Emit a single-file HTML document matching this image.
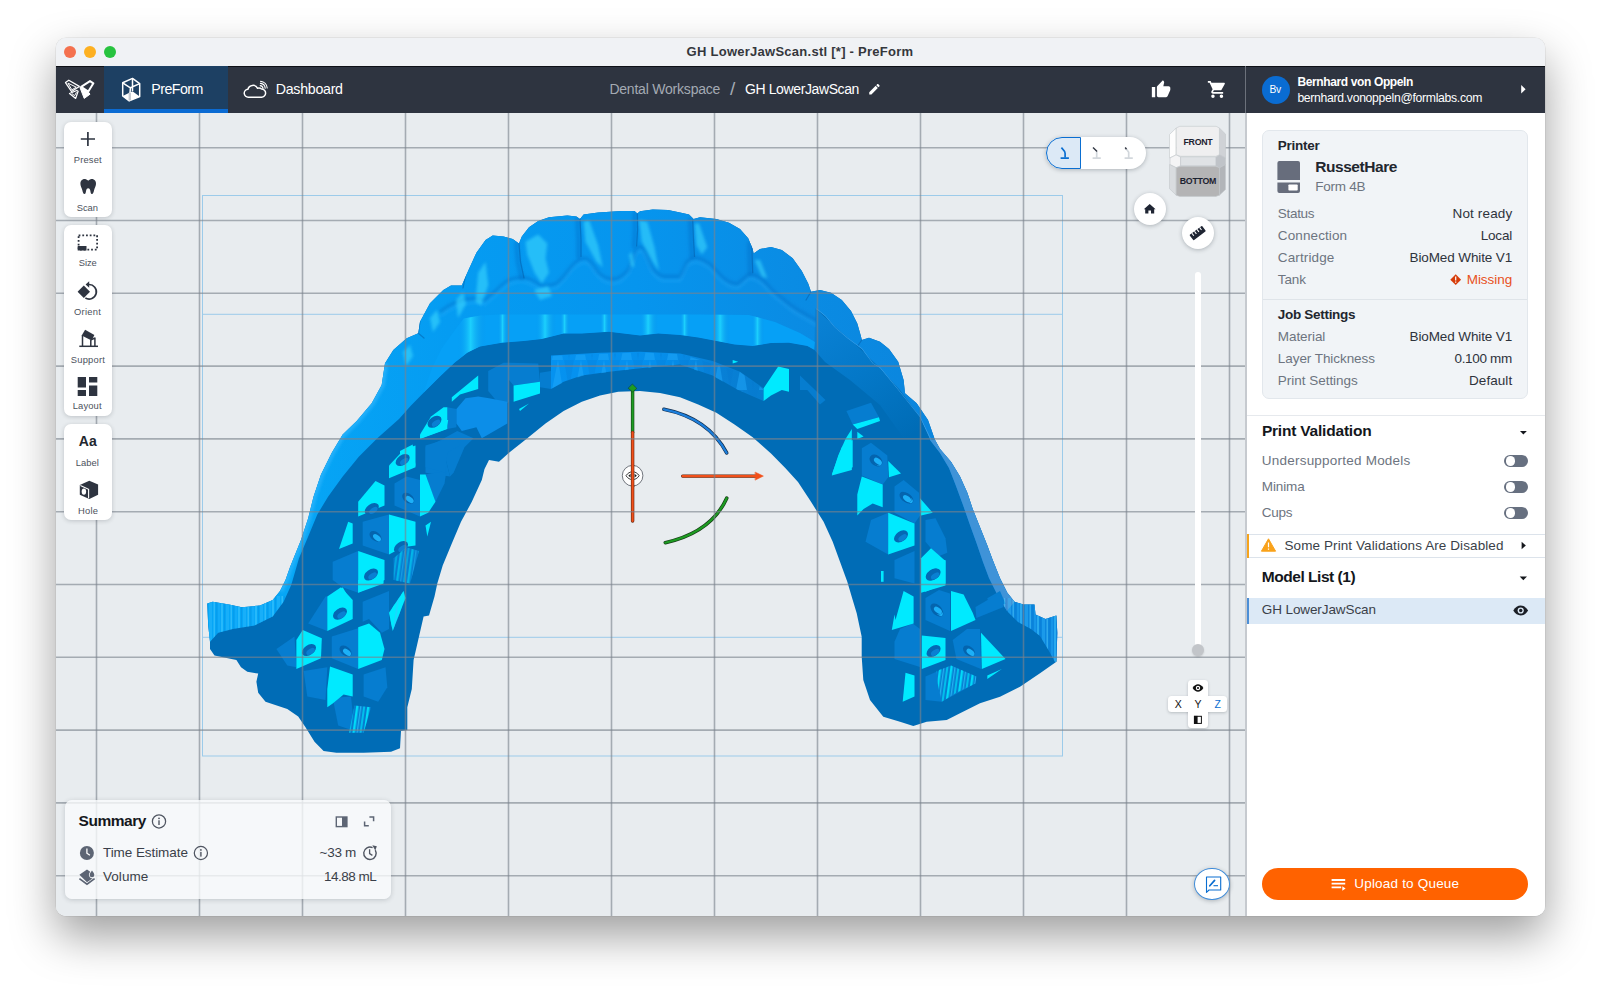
<!DOCTYPE html>
<html lang="en">
<head>
<meta charset="utf-8">
<title>GH LowerJawScan.stl [*] - PreForm</title>
<style>
html,body{margin:0;padding:0;background:#fff;}
body{width:1600px;height:990px;position:relative;overflow:hidden;font-family:"Liberation Sans",Arial,sans-serif;}
.t{position:absolute;white-space:nowrap;line-height:0;}
#win{position:absolute;left:56px;top:37.5px;width:1488.5px;height:878.5px;border-radius:10px;overflow:hidden;background:#e8ecef;}
#shadow{position:absolute;left:56px;top:37.5px;width:1488.5px;height:878.5px;border-radius:10px;box-shadow:0 0 0 .5px rgba(0,0,0,.10),0 20px 45px rgba(0,0,0,.38);}
#titlebar{position:absolute;left:0;top:0;width:100%;height:28.5px;background:#f0f2f5;}
.tl{position:absolute;top:8.5px;width:12px;height:12px;border-radius:50%;}
#nav{position:absolute;left:0;top:28.5px;width:100%;height:47px;background:#2e3440;}
#tab{position:absolute;left:48px;top:0;width:124px;height:43px;background:#1d4063;border-bottom:4px solid #0b6bd3;}
#viewport{position:absolute;left:0;top:75.5px;width:1190px;height:803px;background:#e8ecef;overflow:hidden;}
#side{position:absolute;left:1191px;top:75.5px;width:297.5px;height:803px;background:#fff;}
.tb{position:absolute;left:8px;width:48px;background:#fff;border-radius:7px;box-shadow:0 1px 4px rgba(40,50,60,.22);}
.round{position:absolute;width:32px;height:32px;border-radius:50%;background:#fff;box-shadow:0 1px 4px rgba(40,50,60,.3);}
.tog{position:absolute;left:257.400px;width:23.600px;height:12px;border-radius:6px;background:#677080;}
.tog i{position:absolute;left:1.200px;top:1.200px;width:9.600px;height:9.600px;border-radius:50%;background:#fff;}
svg{position:absolute;overflow:visible;}
</style>
</head>
<body>
<div id="shadow"></div>
<div id="win">
 <header id="titlebar">
  <div class="tl" style="left:7.7px;background:#f4714f"></div>
  <div class="tl" style="left:27.6px;background:#fdb021"></div>
  <div class="tl" style="left:47.5px;background:#27c33f"></div>
<span class="t" style="left:630.6px;top:14.1px;font-size:13px;font-weight:700;color:#34373c;letter-spacing:0.26px;">GH LowerJawScan.stl [*] - PreForm</span>
 </header>
 <nav id="nav">
  <div style="position:absolute;left:0;top:0;width:100%;height:1px;background:#0e1117"></div>
  <div id="tab"></div>
  <div style="position:absolute;left:1189px;top:0;width:1px;height:47px;background:#6c717b"></div>
  <div style="position:absolute;left:1205.5px;top:9.5px;width:28px;height:28px;border-radius:50%;background:#0a6cd2"></div>
  <svg width="1488" height="47" viewBox="0 0 1488 47" style="left:0;top:0">
   <g fill="none" stroke="#fff" stroke-width="1.25" stroke-linejoin="round" stroke-linecap="round">
    <!-- butterfly logo -->
    <path d="M9.500 16.600L12.800 14.200L23.300 20.400L15.600 25.600Z"/>
    <path d="M12.300 17.300L20.300 21.200L16.200 23.600Z" stroke-width="1"/>
    <path d="M13.500 27.500L20.800 24.500L22.100 25.300L19.700 32.400Z"/>
    <path d="M16.200 27.800L18.600 29.700L20.300 26.600" stroke-width="1"/>
    <path d="M25.100 20.900L34 15.100L37.400 17.300L32.300 25.600Z" stroke-width="2"/>
   </g>
   <path d="M23.900 21.300L32.600 26.300L34 28.200L28.200 32.400Z" fill="#fff" stroke="#fff" stroke-width="1" stroke-linejoin="round"/>
   <!-- preform printer cube -->
   <g fill="none" stroke="#fff" stroke-width="1.5" stroke-linejoin="round">
    <path d="M66.7 16.8L76.5 12.4L83.7 17.6V30.6L73.2 34.9L66.7 30Z"/>
    <path d="M66.7 16.8L74.4 21.8L83.7 17.6M74.4 21.8L73.4 34.6M76.5 12.4V25"/>
   </g>
   <path d="M66.7 30L76.5 25.2L83.7 30.6L73.2 34.9Z" fill="#fff"/>
   <path d="M72.6 26.8H75V34.4H72.6Z" fill="#c4c9d0"/>
   <!-- cloud -->
   <path d="M192.6 31.2H205.4A4.1 4.1 0 0 0 205.6 23A4.6 4.6 0 0 0 201.6 22.3A5.2 5.2 0 0 0 191.9 23.2A4 4 0 0 0 192.6 31.2Z" fill="none" stroke="#fff" stroke-width="1.5" stroke-linejoin="round"/>
   <g fill="none" stroke="#fff" stroke-width="1.1" stroke-linecap="round">
    <path d="M204.2 19.6A3 3 0 0 1 207 22.4"/>
    <path d="M204.4 17.4A5.2 5.2 0 0 1 209.2 22.2"/>
    <path d="M204.6 15.4A7.2 7.2 0 0 1 211.2 22"/>
   </g>
   <!-- thumb up (material) -->
   <g transform="translate(1095 13.5) scale(.84)" fill="#fff"><path d="M1 21h4V9H1v12zm22-11c0-1.1-.9-2-2-2h-6.31l.95-4.57.03-.32c0-.41-.17-.79-.44-1.06L14.170 1 7.590 7.590C7.220 7.950 7 8.450 7 9v10c0 1.100.9 2 2 2h9c.83 0 1.540-.5 1.840-1.220l3.020-7.050c.09-.23.140-.47.140-.73v-2z"/></g>
   <!-- cart (material) -->
   <g transform="translate(1151 13.3) scale(.85)" fill="#fff"><path d="M7 18c-1.100 0-1.990.9-1.990 2S5.900 22 7 22s2-.9 2-2-.9-2-2-2zM1 2v2h2l3.600 7.590-1.350 2.450c-.16.280-.25.610-.25.960 0 1.100.9 2 2 2h12v-2H7.420c-.14 0-.25-.11-.25-.25l.03-.12.900-1.630h7.450c.75 0 1.410-.41 1.750-1.030l3.580-6.490A1.003 1.003 0 0 0 20 4H5.210l-.94-2H1zm16 16c-1.100 0-1.990.9-1.990 2s.890 2 1.990 2 2-.9 2-2-.9-2-2-2z"/></g>
   <!-- pencil -->
   <g transform="translate(811.5 16.2) scale(.58)" fill="#fff"><path d="M3 17.250V21h3.750L17.810 9.940l-3.750-3.750L3 17.250zM20.710 7.040a.996.996 0 0 0 0-1.410l-2.340-2.340a.996.996 0 0 0-1.410 0l-1.830 1.830 3.750 3.750 1.830-1.830z"/></g>
   <!-- right arrow -->
   <path d="M1465.200 19L1469.600 23.300L1465.200 27.600Z" fill="#fff"/>
  </svg>

<span class="t" style="left:95.3px;top:23.2px;font-size:14.2px;color:#ffffff;letter-spacing:-0.53px;">PreForm</span>
<span class="t" style="left:219.8px;top:23.2px;font-size:14.2px;color:#ffffff;letter-spacing:-0.28px;">Dashboard</span>
<span class="t" style="left:553.4px;top:22.6px;font-size:14px;color:#a4aab3;letter-spacing:-0.21px;">Dental Workspace</span>
<span class="t" style="left:689.0px;top:22.6px;font-size:14px;color:#ffffff;letter-spacing:-0.39px;">GH LowerJawScan</span>
<span class="t" style="left:1241.4px;top:15.5px;font-size:12px;font-weight:700;color:#ffffff;letter-spacing:-0.37px;">Bernhard von Oppeln</span>
<span class="t" style="left:1241.4px;top:31.5px;font-size:12.2px;color:#ffffff;letter-spacing:-0.30px;">bernhard.vonoppeln@formlabs.com</span>
<span class="t" style="left:1213.6px;top:23.9px;font-size:10.3px;color:#ffffff;letter-spacing:-0.43px;">Bv</span>
<span class="t" style="left:674.0px;top:23.0px;font-size:19px;color:#a4aab3;">/</span>
 </nav>
 <main id="viewport">
  <svg width="1190" height="803" viewBox="56 113 1190 803" style="left:0;top:0">
   <g fill="none" stroke="#9ccbea" stroke-width="1">
    <rect x="202.5" y="195.5" width="860" height="560.5"/>
    <path d="M202.5 314.3H1062.5M202.5 637.3H1062.5"/>
   </g>
<defs>
<linearGradient id="gTeeth" gradientUnits="userSpaceOnUse" x1="290" y1="0" x2="920" y2="0"><stop offset="0" stop-color="#06a6f6"/><stop offset=".25" stop-color="#059cf2"/><stop offset=".55" stop-color="#0695ee"/><stop offset=".8" stop-color="#0a8ce4"/><stop offset="1" stop-color="#0b86de"/></linearGradient>
<linearGradient id="gCyl" x1="0" y1="0" x2="1" y2="0"><stop offset="0" stop-color="#0798f0" stop-opacity="0"/><stop offset=".45" stop-color="#22dcff"/><stop offset="1" stop-color="#0c8ae2" stop-opacity="0"/></linearGradient>
<linearGradient id="gFootL" x1="0" y1="0" x2="1" y2="0"><stop offset="0" stop-color="#2fb8ff"/><stop offset=".25" stop-color="#0f8fe8"/><stop offset=".5" stop-color="#1aa8f8"/><stop offset="1" stop-color="#0c8ae2"/></linearGradient>
<linearGradient id="gWall" gradientUnits="userSpaceOnUse" x1="551" y1="0" x2="764" y2="0"><stop offset="0" stop-color="#0592f0"/><stop offset=".5" stop-color="#058fec"/><stop offset=".8" stop-color="#0880d6"/><stop offset="1" stop-color="#067dd0"/></linearGradient>
<linearGradient id="gWedge" gradientUnits="userSpaceOnUse" x1="815" y1="310" x2="905" y2="440"><stop offset="0" stop-color="#0a82d6"/><stop offset=".5" stop-color="#0478c8"/><stop offset="1" stop-color="#006cb6"/></linearGradient>
<clipPath id="cSil"><polygon points="207.3,603.6 212.7,601.8 229.0,604.5 241.8,607.3 260.0,605.5 272.7,600.0 280.0,591.0 285.5,580.0 290.0,567.3 293.6,558.2 301.0,540.0 308.2,518.2 313.6,496.4 321.0,474.5 331.8,452.7 342.7,434.5 356.7,421.0 371.7,403.3 381.7,385.0 385.0,363.3 393.3,350.0 406.7,338.3 418.3,333.3 420.0,321.7 430.0,303.3 443.3,290.0 451.0,285.5 461.8,285.5 467.3,272.7 476.4,252.7 485.5,240.0 492.7,235.5 503.6,236.4 512.7,239.0 519.0,243.6 521.8,236.4 529.0,227.3 538.2,221.0 549.0,217.3 567.3,215.5 576.4,216.4 580.0,219.0 583.6,214.5 598.2,212.4 621.8,211.0 634.5,211.0 637.3,213.6 640.0,211.3 652.7,209.5 668.0,210.0 680.0,212.5 689.0,214.5 693.6,219.0 700.0,217.3 716.4,219.0 729.0,222.7 740.0,229.0 748.2,238.2 752.7,249.0 753.6,253.6 760.0,249.0 771.0,247.0 781.8,250.0 792.7,258.2 801.8,271.0 808.2,283.6 811.0,291.8 820.0,290.0 831.0,292.7 841.8,300.0 851.0,311.0 857.3,323.6 861.0,336.4 861.8,340.0 869.0,337.8 880.0,341.8 889.0,349.0 898.2,361.8 903.6,380.0 905.0,393.3 916.7,403.3 928.0,420.0 935.0,440.0 940.0,449.0 951.0,461.8 960.0,476.4 967.3,492.7 972.7,509.0 980.0,527.3 987.3,545.5 992.7,560.0 1000.0,578.2 1007.3,592.7 1014.5,601.8 1023.6,604.5 1034.5,604.5 1035.5,614.5 1045.5,619.0 1056.4,615.5 1057.3,632.7 1056.4,661.8 1040.0,673.3 1020.0,686.7 1000.0,696.7 980.0,703.3 960.0,713.3 946.7,720.0 926.7,721.7 913.3,726.0 900.0,721.7 883.3,716.7 870.0,700.0 863.3,680.0 861.7,656.7 861.7,636.7 856.7,613.3 852.7,600.0 847.3,581.8 840.0,561.8 832.7,541.8 823.6,521.8 811.0,501.8 798.0,482.0 785.5,468.2 771.0,453.6 752.7,437.3 734.5,424.5 716.4,412.7 698.2,404.5 680.0,397.3 660.0,393.0 640.0,391.0 618.2,391.8 600.0,395.5 581.8,401.8 563.6,411.0 545.5,423.6 527.3,438.2 509.0,452.7 499.0,461.8 489.0,460.0 484.5,469.0 481.8,480.0 471.8,501.8 461.0,521.8 451.8,543.6 442.7,565.5 437.3,583.6 434.5,596.4 429.0,615.5 423.6,616.4 418.2,640.0 413.6,660.0 411.8,689.0 407.3,707.3 407.3,730.0 401.0,731.0 400.0,748.2 391.0,751.8 363.6,752.7 336.4,752.7 323.6,751.0 314.5,741.8 305.5,727.3 298.2,716.4 287.3,709.0 265.5,701.8 258.2,692.7 256.4,681.8 258.2,673.6 247.3,671.8 241.0,667.3 236.4,660.0 214.5,655.5 210.0,649.0 210.0,641.8 208.2,625.5"/></clipPath>
<clipPath id="cLight"><polygon points="207.3,603.6 212.7,601.8 229.0,604.5 241.8,607.3 260.0,605.5 272.7,600.0 280.0,591.0 285.5,580.0 290.0,567.3 293.6,558.2 301.0,540.0 308.2,518.2 313.6,496.4 321.0,474.5 331.8,452.7 342.7,434.5 356.7,421.0 371.7,403.3 381.7,385.0 385.0,363.3 393.3,350.0 406.7,338.3 418.3,333.3 420.0,321.7 430.0,303.3 443.3,290.0 451.0,285.5 461.8,285.5 467.3,272.7 476.4,252.7 485.5,240.0 492.7,235.5 503.6,236.4 512.7,239.0 519.0,243.6 521.8,236.4 529.0,227.3 538.2,221.0 549.0,217.3 567.3,215.5 576.4,216.4 580.0,219.0 583.6,214.5 598.2,212.4 621.8,211.0 634.5,211.0 637.3,213.6 640.0,211.3 652.7,209.5 668.0,210.0 680.0,212.5 689.0,214.5 693.6,219.0 700.0,217.3 716.4,219.0 729.0,222.7 740.0,229.0 748.2,238.2 752.7,249.0 753.6,253.6 760.0,249.0 771.0,247.0 781.8,250.0 792.7,258.2 801.8,271.0 808.2,283.6 811.0,291.8 820.0,290.0 831.0,292.7 841.8,300.0 851.0,311.0 857.3,323.6 861.0,336.4 861.8,340.0 869.0,337.8 880.0,341.8 889.0,349.0 898.2,361.8 903.6,380.0 905.0,393.3 916.7,403.3 928.0,420.0 935.0,440.0 940.0,449.0 951.0,461.8 960.0,476.4 967.3,492.7 972.7,509.0 980.0,527.3 987.3,545.5 992.7,560.0 1000.0,578.2 1007.3,592.7 1014.5,601.8 1023.6,604.5 1034.5,604.5 1035.5,614.5 1045.5,619.0 1056.4,615.5 1057.3,632.7 1056.4,661.8 1055.0,662.0 1049.0,651.0 1040.0,636.0 1031.0,629.0 1018.0,622.0 1007.0,611.0 998.0,596.0 989.0,578.0 983.0,562.0 976.5,543.0 970.0,525.0 963.0,505.0 956.0,486.0 949.0,468.0 940.0,453.0 930.0,440.0 920.0,417.3 898.2,390.0 880.0,368.0 872.7,363.6 861.8,349.0 847.3,338.2 834.5,327.3 825.5,316.4 816.4,309.0 815.5,330.0 814.5,350.0 807.3,346.0 789.0,342.7 771.0,343.0 752.7,346.0 734.5,344.5 716.4,341.0 698.2,337.5 680.0,335.0 658.2,333.6 640.0,335.5 609.0,331.8 581.8,333.6 563.6,333.6 541.8,339.0 523.6,341.0 501.8,342.7 480.0,346.4 467.3,352.7 454.5,362.7 440.0,376.4 423.6,392.7 411.0,405.5 399.0,419.0 377.3,438.2 359.0,456.4 342.7,476.4 328.2,496.4 317.3,514.5 308.2,536.4 299.0,558.2 292.7,580.0 291.0,585.5 283.6,601.8 272.7,616.4 254.5,625.5 232.7,629.0 218.2,632.7 210.0,641.8 208.2,625.5"/></clipPath>
</defs>
<polygon points="207.3,603.6 212.7,601.8 229.0,604.5 241.8,607.3 260.0,605.5 272.7,600.0 280.0,591.0 285.5,580.0 290.0,567.3 293.6,558.2 301.0,540.0 308.2,518.2 313.6,496.4 321.0,474.5 331.8,452.7 342.7,434.5 356.7,421.0 371.7,403.3 381.7,385.0 385.0,363.3 393.3,350.0 406.7,338.3 418.3,333.3 420.0,321.7 430.0,303.3 443.3,290.0 451.0,285.5 461.8,285.5 467.3,272.7 476.4,252.7 485.5,240.0 492.7,235.5 503.6,236.4 512.7,239.0 519.0,243.6 521.8,236.4 529.0,227.3 538.2,221.0 549.0,217.3 567.3,215.5 576.4,216.4 580.0,219.0 583.6,214.5 598.2,212.4 621.8,211.0 634.5,211.0 637.3,213.6 640.0,211.3 652.7,209.5 668.0,210.0 680.0,212.5 689.0,214.5 693.6,219.0 700.0,217.3 716.4,219.0 729.0,222.7 740.0,229.0 748.2,238.2 752.7,249.0 753.6,253.6 760.0,249.0 771.0,247.0 781.8,250.0 792.7,258.2 801.8,271.0 808.2,283.6 811.0,291.8 820.0,290.0 831.0,292.7 841.8,300.0 851.0,311.0 857.3,323.6 861.0,336.4 861.8,340.0 869.0,337.8 880.0,341.8 889.0,349.0 898.2,361.8 903.6,380.0 905.0,393.3 916.7,403.3 928.0,420.0 935.0,440.0 940.0,449.0 951.0,461.8 960.0,476.4 967.3,492.7 972.7,509.0 980.0,527.3 987.3,545.5 992.7,560.0 1000.0,578.2 1007.3,592.7 1014.5,601.8 1023.6,604.5 1034.5,604.5 1035.5,614.5 1045.5,619.0 1056.4,615.5 1057.3,632.7 1056.4,661.8 1040.0,673.3 1020.0,686.7 1000.0,696.7 980.0,703.3 960.0,713.3 946.7,720.0 926.7,721.7 913.3,726.0 900.0,721.7 883.3,716.7 870.0,700.0 863.3,680.0 861.7,656.7 861.7,636.7 856.7,613.3 852.7,600.0 847.3,581.8 840.0,561.8 832.7,541.8 823.6,521.8 811.0,501.8 798.0,482.0 785.5,468.2 771.0,453.6 752.7,437.3 734.5,424.5 716.4,412.7 698.2,404.5 680.0,397.3 660.0,393.0 640.0,391.0 618.2,391.8 600.0,395.5 581.8,401.8 563.6,411.0 545.5,423.6 527.3,438.2 509.0,452.7 499.0,461.8 489.0,460.0 484.5,469.0 481.8,480.0 471.8,501.8 461.0,521.8 451.8,543.6 442.7,565.5 437.3,583.6 434.5,596.4 429.0,615.5 423.6,616.4 418.2,640.0 413.6,660.0 411.8,689.0 407.3,707.3 407.3,730.0 401.0,731.0 400.0,748.2 391.0,751.8 363.6,752.7 336.4,752.7 323.6,751.0 314.5,741.8 305.5,727.3 298.2,716.4 287.3,709.0 265.5,701.8 258.2,692.7 256.4,681.8 258.2,673.6 247.3,671.8 241.0,667.3 236.4,660.0 214.5,655.5 210.0,649.0 210.0,641.8 208.2,625.5" fill="#006cb6" />
<polygon points="207.3,603.6 212.7,601.8 229.0,604.5 241.8,607.3 260.0,605.5 272.7,600.0 280.0,591.0 285.5,580.0 290.0,567.3 293.6,558.2 301.0,540.0 308.2,518.2 313.6,496.4 321.0,474.5 331.8,452.7 342.7,434.5 356.7,421.0 371.7,403.3 381.7,385.0 385.0,363.3 393.3,350.0 406.7,338.3 418.3,333.3 420.0,321.7 430.0,303.3 443.3,290.0 451.0,285.5 461.8,285.5 467.3,272.7 476.4,252.7 485.5,240.0 492.7,235.5 503.6,236.4 512.7,239.0 519.0,243.6 521.8,236.4 529.0,227.3 538.2,221.0 549.0,217.3 567.3,215.5 576.4,216.4 580.0,219.0 583.6,214.5 598.2,212.4 621.8,211.0 634.5,211.0 637.3,213.6 640.0,211.3 652.7,209.5 668.0,210.0 680.0,212.5 689.0,214.5 693.6,219.0 700.0,217.3 716.4,219.0 729.0,222.7 740.0,229.0 748.2,238.2 752.7,249.0 753.6,253.6 760.0,249.0 771.0,247.0 781.8,250.0 792.7,258.2 801.8,271.0 808.2,283.6 811.0,291.8 820.0,290.0 831.0,292.7 841.8,300.0 851.0,311.0 857.3,323.6 861.0,336.4 861.8,340.0 869.0,337.8 880.0,341.8 889.0,349.0 898.2,361.8 903.6,380.0 905.0,393.3 916.7,403.3 928.0,420.0 935.0,440.0 940.0,449.0 951.0,461.8 960.0,476.4 967.3,492.7 972.7,509.0 980.0,527.3 987.3,545.5 992.7,560.0 1000.0,578.2 1007.3,592.7 1014.5,601.8 1023.6,604.5 1034.5,604.5 1035.5,614.5 1045.5,619.0 1056.4,615.5 1057.3,632.7 1056.4,661.8 1055.0,662.0 1049.0,651.0 1040.0,636.0 1031.0,629.0 1018.0,622.0 1007.0,611.0 998.0,596.0 989.0,578.0 983.0,562.0 976.5,543.0 970.0,525.0 963.0,505.0 956.0,486.0 949.0,468.0 940.0,453.0 930.0,440.0 920.0,417.3 898.2,390.0 880.0,368.0 872.7,363.6 861.8,349.0 847.3,338.2 834.5,327.3 825.5,316.4 816.4,309.0 815.5,330.0 814.5,350.0 807.3,346.0 789.0,342.7 771.0,343.0 752.7,346.0 734.5,344.5 716.4,341.0 698.2,337.5 680.0,335.0 658.2,333.6 640.0,335.5 609.0,331.8 581.8,333.6 563.6,333.6 541.8,339.0 523.6,341.0 501.8,342.7 480.0,346.4 467.3,352.7 454.5,362.7 440.0,376.4 423.6,392.7 411.0,405.5 399.0,419.0 377.3,438.2 359.0,456.4 342.7,476.4 328.2,496.4 317.3,514.5 308.2,536.4 299.0,558.2 292.7,580.0 291.0,585.5 283.6,601.8 272.7,616.4 254.5,625.5 232.7,629.0 218.2,632.7 210.0,641.8 208.2,625.5" fill="url(#gTeeth)" />
<polygon points="815.0,308.0 834.5,326.0 852.7,342.0 877.0,365.0 900.0,390.0 920.0,417.0 931.0,440.0 905.0,440.0 880.0,405.0 850.0,380.0 825.0,362.0 814.5,350.0" fill="url(#gWedge)" />
<polygon points="935.0,440.0 940.0,449.0 951.0,461.8 960.0,476.4 967.3,492.7 972.7,509.0 980.0,527.3 987.3,545.5 992.7,560.0 1000.0,578.2 1007.3,592.7 1014.5,601.8 1007.0,611.0 998.0,596.0 989.0,578.0 983.0,562.0 976.5,543.0 970.0,525.0 963.0,505.0 956.0,486.0 949.0,468.0 940.0,453.0 930.0,440.0" fill="#3f93d8" />
<polygon points="551.0,355.5 600.0,352.7 640.0,351.8 680.0,353.6 712.7,361.0 740.0,371.8 763.6,388.2 763.6,401.0 738.2,390.0 712.7,375.5 680.0,364.5 640.0,368.2 609.0,371.8 581.8,375.5 563.6,381.8 551.0,389.0" fill="url(#gWall)" />
<polygon points="308.2,623.6 325.5,596.4 327.3,596.4 327.3,631.0" fill="#067dd0" />
<polygon points="331.8,636.4 358.2,628.2 358.2,669.0 331.8,658.2" fill="#067dd0" />
<polygon points="362.7,601.8 389.0,591.0 389.0,629.0 381.8,632.7 369.0,619.0 362.7,621.8" fill="#067dd0" />
<polygon points="363.6,674.5 385.5,667.3 387.3,687.3 378.2,701.8 363.6,696.4" fill="#067dd0" />
<polygon points="303.6,671.0 327.3,667.3 325.5,700.0 307.3,696.4" fill="#067dd0" />
<polygon points="276.4,649.0 294.5,636.4 296.4,667.3 287.3,665.5" fill="#067dd0" />
<polygon points="332.7,698.0 351.0,696.4 354.5,731.0 338.2,725.5" fill="#067dd0" />
<polygon points="354.5,705.5 371.0,707.3 363.6,732.7 349.0,732.7" fill="#067dd0" />
<polygon points="425.5,447.3 441.0,440.0 450.0,476.4 425.5,472.7" fill="#067dd0" />
<polygon points="441.0,440.0 457.3,431.0 473.6,438.2 464.5,447.3 453.6,472.7 450.0,476.4" fill="#067dd0" />
<polygon points="394.5,483.6 406.4,476.4 420.0,480.0 420.0,516.4 394.5,505.5" fill="#067dd0" />
<polygon points="362.7,521.8 389.0,514.5 389.0,554.5 362.7,545.5" fill="#067dd0" />
<polygon points="332.7,561.8 358.2,551.0 358.2,592.7 342.7,587.3 332.7,580.0" fill="#067dd0" />
<polygon points="393.6,558.2 406.4,547.3 419.0,551.0 410.0,583.6 393.6,580.0" fill="#067dd0" />
<polygon points="424.5,474.5 446.4,471.0 444.5,483.6 435.5,501.8" fill="#067dd0" />
<polygon points="488.2,371.0 503.6,362.7 509.0,362.7 509.0,401.8 501.8,407.3 488.2,391.0" fill="#067dd0" />
<polygon points="509.0,362.7 538.2,363.6 540.0,381.8 513.6,385.5 509.0,380.0" fill="#067dd0" />
<polygon points="540.0,372.7 551.0,371.0 551.0,389.0 540.0,387.3" fill="#067dd0" />
<polygon points="425.5,445.5 443.6,440.0 456.4,438.2 460.0,445.5 447.3,452.7 445.5,472.7 425.5,467.3" fill="#067dd0" />
<polygon points="447.3,407.3 456.4,409.0 456.4,427.3 447.3,429.0" fill="#067dd0" />
<polygon points="846.4,411.0 871.0,402.7 879.0,417.3 852.7,424.5" fill="#067dd0" />
<polygon points="800.0,375.5 825.5,400.0 820.0,404.5 807.3,390.0 800.0,390.0" fill="#067dd0" />
<polygon points="861.8,448.2 871.0,442.7 887.3,455.5 888.2,477.3 882.7,484.5 861.8,475.5" fill="#067dd0" />
<polygon points="894.5,486.4 903.6,480.0 919.0,492.7 920.0,515.5 914.5,523.6 894.5,512.7" fill="#067dd0" />
<polygon points="865.5,541.8 871.0,520.0 888.2,512.7 888.2,554.5" fill="#067dd0" />
<polygon points="925.5,520.0 935.5,518.2 945.5,538.2 947.3,552.7 938.2,556.4 931.0,548.2 925.5,541.8" fill="#067dd0" />
<polygon points="894.5,560.0 914.5,551.0 914.5,583.6 894.5,578.2" fill="#067dd0" />
<polygon points="925.5,598.0 939.0,590.0 950.0,593.6 950.0,631.0 925.5,620.0" fill="#067dd0" />
<polygon points="987.3,598.2 1000.0,591.0 1005.5,603.6 991.0,611.0" fill="#067dd0" />
<polygon points="975.5,607.0 1000.0,592.7 1003.6,607.0 976.4,618.0" fill="#067dd0" />
<polygon points="952.7,640.0 967.0,629.0 980.0,629.0 981.0,669.0 956.4,659.0" fill="#067dd0" />
<polygon points="925.5,676.4 951.0,665.5 976.4,676.4 975.5,683.6 941.8,701.8 925.5,700.0" fill="#067dd0" />
<polygon points="900.0,629.0 912.7,623.6 920.0,629.0 920.0,667.0 894.5,659.0 894.5,641.8" fill="#067dd0" />
<polygon points="456.4,409.0 465.5,398.2 478.2,396.4 489.0,398.2 507.3,401.8 507.3,423.6 481.8,438.2 476.4,427.3 461.8,431.0 456.4,423.6" fill="#0c8ee8" />
<polygon points="327.3,596.4 341.0,587.3 352.7,600.0 352.7,619.0 327.3,631.0" fill="#00eaff" />
<polygon points="358.2,580.0 383.6,580.0 383.6,583.6 358.2,592.7" fill="#00eaff" />
<polygon points="296.4,640.0 302.7,630.0 321.8,638.2 321.0,658.2 296.4,669.0" fill="#00eaff" />
<polygon points="358.2,627.3 369.0,623.6 380.0,632.7 384.5,649.0 381.8,660.0 358.2,669.0" fill="#00eaff" />
<polygon points="330.0,666.4 352.7,674.5 352.7,696.4 343.6,694.5 332.7,703.6 327.3,707.3 327.3,689.0" fill="#00eaff" />
<polygon points="389.0,612.7 403.6,591.0 405.5,598.0 392.7,631.0" fill="#00eaff" />
<polygon points="420.0,436.4 433.6,420.0 448.2,420.0 446.4,429.0 421.0,438.2" fill="#00eaff" />
<polygon points="389.0,465.5 404.5,449.0 415.5,445.5 415.5,467.3 389.0,478.2" fill="#00eaff" />
<polygon points="358.2,501.8 375.5,481.0 384.5,485.5 384.5,505.5 358.2,516.4" fill="#00eaff" />
<polygon points="420.0,474.5 425.5,474.5 435.5,501.8 428.2,512.7 420.0,516.4" fill="#00eaff" />
<polygon points="389.0,514.5 415.5,521.8 415.5,545.5 402.7,547.3 389.0,554.5" fill="#00eaff" />
<polygon points="339.0,549.0 348.2,521.8 352.7,523.6 352.7,543.6" fill="#00eaff" />
<polygon points="358.2,551.0 384.5,560.0 384.5,580.0 358.2,592.7" fill="#00eaff" />
<polygon points="331.8,600.0 342.7,587.3 350.0,600.0 340.0,606.0" fill="#00eaff" />
<polygon points="425.5,525.5 431.0,521.8 427.3,536.4" fill="#00eaff" />
<polygon points="513.6,385.5 540.0,381.8 540.0,393.6 513.6,401.8" fill="#00eaff" />
<polygon points="451.8,397.3 478.2,375.5 478.2,389.0 460.0,394.5 451.8,401.8" fill="#00eaff" />
<polygon points="420.0,434.5 431.0,416.4 443.6,407.3 447.3,407.3 447.3,429.0 420.0,439.0" fill="#00eaff" />
<polygon points="519.0,409.0 529.0,403.6 520.0,411.0" fill="#00eaff" />
<polygon points="400.0,451.0 412.7,444.5 415.5,465.5 400.0,472.7" fill="#00eaff" />
<polygon points="763.6,388.2 778.2,366.4 789.0,369.0 789.0,391.8 781.8,390.0 771.0,395.5 763.6,401.0" fill="#00eaff" />
<polygon points="732.7,360.0 738.2,361.8 732.7,363.6" fill="#00eaff" />
<polygon points="852.7,424.5 879.0,417.3 880.0,421.0 857.3,429.0" fill="#00eaff" />
<polygon points="851.8,429.0 851.8,470.0 831.8,475.5 838.2,455.5 845.5,439.0" fill="#00eaff" />
<polygon points="857.3,431.8 863.6,436.4 857.3,439.0" fill="#00eaff" />
<polygon points="888.2,461.0 901.0,473.6 889.0,477.3" fill="#00eaff" />
<polygon points="861.8,476.4 882.7,484.5 882.7,507.3 872.7,503.6 863.6,509.0 857.3,515.5 857.3,494.5" fill="#00eaff" />
<polygon points="831.8,474.5 841.8,447.3 852.7,440.0 852.7,467.3" fill="#00eaff" />
<polygon points="920.0,498.2 932.7,512.7 921.0,515.5" fill="#00eaff" />
<polygon points="888.2,512.7 914.5,523.6 914.5,545.5 888.2,554.5" fill="#00eaff" />
<polygon points="921.0,558.2 931.0,548.2 945.5,561.0 945.5,585.5 921.0,592.7" fill="#00eaff" />
<polygon points="895.5,620.0 903.6,591.0 913.6,596.4 913.6,623.6 891.8,630.0 894.5,614.5" fill="#00eaff" />
<polygon points="951.0,591.0 963.6,594.5 972.7,612.7 975.5,620.0 951.0,631.0" fill="#00eaff" />
<polygon points="881.0,571.0 883.6,571.0 883.6,581.8 881.0,581.8" fill="#00eaff" />
<polygon points="921.0,560.0 945.5,560.0 945.5,583.6 925.5,591.8 921.0,589.0" fill="#00eaff" />
<polygon points="921.8,635.5 945.5,638.0 945.5,660.0 921.8,669.0" fill="#00eaff" />
<polygon points="981.0,632.7 1005.5,659.0 981.8,669.0" fill="#00eaff" />
<polygon points="987.3,675.5 1001.8,669.0 987.3,679.0" fill="#00eaff" />
<polygon points="905.5,672.7 914.5,675.5 914.5,696.4 902.7,701.8" fill="#00eaff" />
<ellipse cx="340.0" cy="613.6" rx="7.8" ry="5.0" transform="rotate(-35 340.0 613.6)" fill="#0468b4"/>
<ellipse cx="341.6" cy="615.0" rx="4.8" ry="2.6" transform="rotate(-35 341.6 615.0)" fill="#0a80d2"/>
<ellipse cx="309.0" cy="650.0" rx="7.8" ry="5.0" transform="rotate(-35 309.0 650.0)" fill="#0468b4"/>
<ellipse cx="310.6" cy="651.4" rx="4.8" ry="2.6" transform="rotate(-35 310.6 651.4)" fill="#0a80d2"/>
<ellipse cx="402.7" cy="460.0" rx="7.8" ry="5.0" transform="rotate(-35 402.7 460.0)" fill="#0468b4"/>
<ellipse cx="404.3" cy="461.4" rx="4.8" ry="2.6" transform="rotate(-35 404.3 461.4)" fill="#0a80d2"/>
<ellipse cx="371.8" cy="509.0" rx="7.8" ry="5.0" transform="rotate(-35 371.8 509.0)" fill="#0468b4"/>
<ellipse cx="373.4" cy="510.4" rx="4.8" ry="2.6" transform="rotate(-35 373.4 510.4)" fill="#0a80d2"/>
<ellipse cx="401.0" cy="547.0" rx="7.8" ry="5.0" transform="rotate(-35 401.0 547.0)" fill="#0468b4"/>
<ellipse cx="402.6" cy="548.4" rx="4.8" ry="2.6" transform="rotate(-35 402.6 548.4)" fill="#0a80d2"/>
<ellipse cx="371.0" cy="574.5" rx="7.8" ry="5.0" transform="rotate(-35 371.0 574.5)" fill="#0468b4"/>
<ellipse cx="372.6" cy="575.9" rx="4.8" ry="2.6" transform="rotate(-35 372.6 575.9)" fill="#0a80d2"/>
<ellipse cx="434.5" cy="421.8" rx="7.8" ry="5.0" transform="rotate(-35 434.5 421.8)" fill="#0468b4"/>
<ellipse cx="436.1" cy="423.2" rx="4.8" ry="2.6" transform="rotate(-35 436.1 423.2)" fill="#0a80d2"/>
<ellipse cx="901.0" cy="536.4" rx="7.8" ry="5.0" transform="rotate(-35 901.0 536.4)" fill="#0468b4"/>
<ellipse cx="902.6" cy="537.8" rx="4.8" ry="2.6" transform="rotate(-35 902.6 537.8)" fill="#0a80d2"/>
<ellipse cx="932.7" cy="574.5" rx="7.8" ry="5.0" transform="rotate(-35 932.7 574.5)" fill="#0468b4"/>
<ellipse cx="934.3" cy="575.9" rx="4.8" ry="2.6" transform="rotate(-35 934.3 575.9)" fill="#0a80d2"/>
<ellipse cx="933.6" cy="574.5" rx="7.8" ry="5.0" transform="rotate(-35 933.6 574.5)" fill="#0468b4"/>
<ellipse cx="935.2" cy="575.9" rx="4.8" ry="2.6" transform="rotate(-35 935.2 575.9)" fill="#0a80d2"/>
<ellipse cx="933.6" cy="651.0" rx="7.8" ry="5.0" transform="rotate(-35 933.6 651.0)" fill="#0468b4"/>
<ellipse cx="935.2" cy="652.4" rx="4.8" ry="2.6" transform="rotate(-35 935.2 652.4)" fill="#0a80d2"/>
<ellipse cx="345.5" cy="651.0" rx="6.8" ry="4.4" transform="rotate(38 345.5 651.0)" fill="#0464ae"/>
<ellipse cx="347.0" cy="652.3" rx="4.6" ry="2.6" transform="rotate(38 347.0 652.3)" fill="#1cb0f8"/>
<ellipse cx="408.2" cy="498.2" rx="6.8" ry="4.4" transform="rotate(38 408.2 498.2)" fill="#0464ae"/>
<ellipse cx="409.7" cy="499.5" rx="4.6" ry="2.6" transform="rotate(38 409.7 499.5)" fill="#1cb0f8"/>
<ellipse cx="375.5" cy="536.4" rx="6.8" ry="4.4" transform="rotate(38 375.5 536.4)" fill="#0464ae"/>
<ellipse cx="377.0" cy="537.7" rx="4.6" ry="2.6" transform="rotate(38 377.0 537.7)" fill="#1cb0f8"/>
<ellipse cx="875.5" cy="461.0" rx="6.8" ry="4.4" transform="rotate(38 875.5 461.0)" fill="#0464ae"/>
<ellipse cx="877.0" cy="462.3" rx="4.6" ry="2.6" transform="rotate(38 877.0 462.3)" fill="#1cb0f8"/>
<ellipse cx="907.3" cy="498.2" rx="6.8" ry="4.4" transform="rotate(38 907.3 498.2)" fill="#0464ae"/>
<ellipse cx="908.8" cy="499.5" rx="4.6" ry="2.6" transform="rotate(38 908.8 499.5)" fill="#1cb0f8"/>
<ellipse cx="937.3" cy="611.0" rx="6.8" ry="4.4" transform="rotate(38 937.3 611.0)" fill="#0464ae"/>
<ellipse cx="938.8" cy="612.3" rx="4.6" ry="2.6" transform="rotate(38 938.8 612.3)" fill="#1cb0f8"/>
<ellipse cx="969.0" cy="651.0" rx="6.8" ry="4.4" transform="rotate(38 969.0 651.0)" fill="#0464ae"/>
<ellipse cx="970.5" cy="652.3" rx="4.6" ry="2.6" transform="rotate(38 970.5 652.3)" fill="#1cb0f8"/>
<ellipse cx="876.4" cy="460.0" rx="6.8" ry="4.4" transform="rotate(38 876.4 460.0)" fill="#0464ae"/>
<ellipse cx="877.9" cy="461.3" rx="4.6" ry="2.6" transform="rotate(38 877.9 461.3)" fill="#1cb0f8"/>
<ellipse cx="905.5" cy="497.3" rx="6.8" ry="4.4" transform="rotate(38 905.5 497.3)" fill="#0464ae"/>
<ellipse cx="907.0" cy="498.6" rx="4.6" ry="2.6" transform="rotate(38 907.0 498.6)" fill="#1cb0f8"/>
<ellipse cx="936.4" cy="609.0" rx="6.8" ry="4.4" transform="rotate(38 936.4 609.0)" fill="#0464ae"/>
<ellipse cx="937.9" cy="610.3" rx="4.6" ry="2.6" transform="rotate(38 937.9 610.3)" fill="#1cb0f8"/>
<defs><filter id="fb1" x="-20%" y="-20%" width="140%" height="140%"><feGaussianBlur stdDeviation="1.8"/></filter><filter id="fb2" x="-20%" y="-20%" width="140%" height="140%"><feGaussianBlur stdDeviation="2.5"/></filter>
<pattern id="pStreak" width="17" height="10" patternUnits="userSpaceOnUse"><rect x="0" width="2" height="10" fill="#45ccff" fill-opacity=".5"/><rect x="3" width="1" height="10" fill="#0468c0" fill-opacity=".18"/><rect x="5" width="3" height="10" fill="#38c0ff" fill-opacity=".35"/><rect x="9.500" width="1.500" height="10" fill="#5ad4ff" fill-opacity=".45"/><rect x="12" width="1.400" height="10" fill="#0468c0" fill-opacity=".15"/><rect x="14" width="2.200" height="10" fill="#30b8ff" fill-opacity=".3"/></pattern>
<pattern id="pStreak2" width="11" height="10" patternUnits="userSpaceOnUse" patternTransform="rotate(8)"><rect x="0" width="2.400" height="10" fill="#00eaff" fill-opacity=".85"/><rect x="4" width="1.300" height="10" fill="#30c8ff" fill-opacity=".7"/><rect x="7" width="2" height="10" fill="#00eaff" fill-opacity=".6"/></pattern>
<pattern id="pStreak3" width="23" height="30" patternUnits="userSpaceOnUse"><path d="M0 30L6 0L11 30Z" fill="#20a8fa"/><path d="M12 0L17 30L22 0Z" fill="#0474cc" fill-opacity=".45"/></pattern>
<clipPath id="cWall"><polygon points="423.6,392.7 432.0,368.0 442.0,348.0 455.0,330.0 463.6,318.5 480.0,315.5 500.0,314.5 600.0,314.5 700.0,314.5 749.0,315.0 775.0,322.0 800.0,333.0 815.0,342.0 814.5,350.0 807.3,346.0 789.0,342.7 771.0,343.0 752.7,346.0 734.5,344.5 716.4,341.0 698.2,337.5 680.0,335.0 658.2,333.6 640.0,335.5 609.0,331.8 581.8,333.6 563.6,333.6 541.8,339.0 523.6,341.0 501.8,342.7 480.0,346.4 467.3,352.7 454.5,362.7 440.0,376.4 423.6,392.7"/></clipPath></defs>
<g clip-path="url(#cLight)">
<polygon points="423.6,392.7 432.0,368.0 442.0,348.0 455.0,330.0 463.6,318.5 480.0,315.5 500.0,314.5 600.0,314.5 700.0,314.5 749.0,315.0 775.0,322.0 800.0,333.0 815.0,342.0 814.5,350.0 807.3,346.0 789.0,342.7 771.0,343.0 752.7,346.0 734.5,344.5 716.4,341.0 698.2,337.5 680.0,335.0 658.2,333.6 640.0,335.5 609.0,331.8 581.8,333.6 563.6,333.6 541.8,339.0 523.6,341.0 501.8,342.7 480.0,346.4 467.3,352.7 454.5,362.7 440.0,376.4 423.6,392.7" fill="#06a0f6"/>
<g clip-path="url(#cWall)">
<rect x="458" y="310" width="28" height="70" fill="url(#gCyl)" opacity=".8"/>
<rect x="536" y="310" width="20" height="70" fill="url(#gCyl)" opacity=".8"/>
<rect x="560" y="310" width="10" height="70" fill="url(#gCyl)" opacity=".8"/>
<rect x="640" y="310" width="18" height="70" fill="url(#gCyl)" opacity=".8"/>
<rect x="712" y="310" width="18" height="70" fill="url(#gCyl)" opacity=".8"/>
<rect x="752" y="310" width="12" height="70" fill="url(#gCyl)" opacity=".8"/>
<rect x="498" y="310" width="10" height="70" fill="url(#gCyl)" opacity=".8"/>
<rect x="600" y="310" width="10" height="70" fill="url(#gCyl)" opacity=".8"/>
<rect x="680" y="310" width="10" height="70" fill="url(#gCyl)" opacity=".8"/>
</g>
<path d="M440 312C455 300 470 296 485 300C498 290 503 283 509 280C516 277 521 277 527.300 278.200C533 280 537 284 541.800 285.500C548 286 552 285 556.400 283.600C563 279 567 272 571 267.300C576 261 581 258 585.500 258.200C591 260 594 268 598.200 272.700C604 278 610 281 618.200 278.200C623 276 626 273 629 269C632 262 634 254 636.400 249C639 246 641 246 643.600 249C647 255 649 263 652.700 269C657 274 660 276 663.600 276.400H680C683 272 685 266 687.300 261.800C691 258 694 257 698.200 258.200C702 259 705 261 709 263.600C714 268 718 274 723.600 278.200C728 282 733 284 738.200 283.600C742 281 745 277 749 274.500C753 274 757 276 760 278.200C765 282 769 287 772.700 291C779 296 785 301 791 305.500C797 310 803 313 809 316.400C815 320 821 323 827.300 327.300" fill="none" stroke="#0560b8" stroke-opacity=".3" stroke-width="4" filter="url(#fb1)"/>
<path d="M440 312C455 300 470 296 485 300C498 290 503 283 509 280C516 277 521 277 527.300 278.200C533 280 537 284 541.800 285.500C548 286 552 285 556.400 283.600C563 279 567 272 571 267.300C576 261 581 258 585.500 258.200C591 260 594 268 598.200 272.700C604 278 610 281 618.200 278.200C623 276 626 273 629 269C632 262 634 254 636.400 249C639 246 641 246 643.600 249C647 255 649 263 652.700 269C657 274 660 276 663.600 276.400H680C683 272 685 266 687.300 261.800C691 258 694 257 698.200 258.200C702 259 705 261 709 263.600C714 268 718 274 723.600 278.200C728 282 733 284 738.200 283.600C742 281 745 277 749 274.500C753 274 757 276 760 278.200C765 282 769 287 772.700 291C779 296 785 301 791 305.500C797 310 803 313 809 316.400C815 320 821 323 827.300 327.300" transform="translate(0 4)" fill="none" stroke="#35b8ff" stroke-opacity=".25" stroke-width="3" filter="url(#fb1)"/>
<g fill="#3fdcff" fill-opacity=".55" filter="url(#fb1)">
<polygon points="525.5,241.8 538.2,234.5 547.3,243.6 545.5,258.2 549.0,272.7 541.8,283.6 534.5,272.7 527.3,254.5"/>
<polygon points="478.2,272.7 485.5,262.0 488.3,285.0 481.0,305.5 475.5,301.8"/>
<polygon points="583.6,221.8 589.0,220.0 598.2,245.5 602.7,267.3 596.4,261.8 585.5,241.8"/>
<polygon points="639.0,220.0 647.3,221.8 654.5,247.3 659.0,271.0 652.7,261.8 641.8,241.8"/>
<polygon points="694.5,223.6 699.0,223.6 707.3,247.3 701.8,254.5 696.4,245.5"/>
<polygon points="754.5,260.0 760.0,260.0 767.3,278.2 761.8,276.4"/>
<polygon points="629.0,254.5 632.0,252.0 634.5,267.3 631.0,266.0"/>
<polygon points="534.0,290.0 548.0,286.0 552.0,296.0 540.0,300.0"/>
<polygon points="456.0,300.0 463.0,292.0 466.0,304.0 458.0,318.0"/>
<polygon points="403.0,352.0 410.0,345.0 413.0,356.0 406.0,366.0"/>
<polygon points="430.0,318.0 437.0,310.0 440.0,322.0 433.0,332.0"/>
</g>
<g fill="none" stroke="#0468c4" stroke-opacity=".35" stroke-width="5" stroke-linecap="round" filter="url(#fb1)" transform="translate(-2.500 0)">
<path d="M519 243.600L520.500 262L524 278"/>
<path d="M580 219L581 240L581 256.400"/>
<path d="M637.300 213.600L637.600 230L636.600 246"/>
<path d="M692.700 220L693.500 240L694.500 256.400"/>
<path d="M751.800 243.600L752.200 258L752.700 272.700"/>
</g>
<g fill="none" stroke="#04549e" stroke-opacity=".45" stroke-width="1.2" stroke-linecap="round">
<path d="M519 243.600L520.500 262L524 278"/>
<path d="M580 219L581 240L581 256.400"/>
<path d="M637.300 213.600L637.600 230L636.600 246"/>
<path d="M692.700 220L693.500 240L694.500 256.400"/>
<path d="M751.800 243.600L752.200 258L752.700 272.700"/>
<path d="M466.700 270L463 288"/>
<path d="M420 321.700L418.300 333.300L424 338"/>
<path d="M811 291.800L806 300"/>
<path d="M861.800 340L857 347"/>
</g>
<path d="M385 363L381.700 385L371.700 403.300L356.700 421L342.700 434.500L331.800 452.700L321 474.500L313.600 496.400L308.200 518.200L301 540L293.600 558.200L290 567.300L285.500 580L280 591" fill="none" stroke="#3cbcff" stroke-opacity=".55" stroke-width="6" filter="url(#fb1)"/>
<rect x="205" y="596" width="92" height="52" fill="url(#pStreak)"/>
<rect x="1004" y="598" width="58" height="70" fill="url(#pStreak)"/>
<path d="M816.400 309L825.500 316.400L834.500 327.300L847.300 338.200L861.800 349L872.700 363.600L880 368L898.200 390L920 417.300L931 440" fill="none" stroke="#4aa8ee" stroke-opacity=".7" stroke-width="1.100"/>
</g>
<g clip-path="url(#cSil)">
<polygon points="936.4,671 951,665.5 976.4,676.4 975.5,683.6 956.4,692.7 941.8,701.8 938.2,687" fill="url(#pStreak2)"/>
<polygon points="354.5,705.5 371,707.3 363.6,732.7 349,732.7" fill="url(#pStreak2)"/>
<polygon points="389,612.7 403.6,591 405.5,598 392.7,631" fill="url(#pStreak2)"/>
<polygon points="393.6,558.2 406.4,547.3 419,551 410,583.6 393.6,580" fill="url(#pStreak2)" opacity=".6"/>
<polygon points="551,356 640,352.500 680,354 740,372 763,389 763,400 738,390 712,375.500 680,365 640,368.500 609,372 582,376 564,382 551,389" fill="url(#pStreak3)" opacity=".5"/>
</g>
   <g fill="none" stroke-linecap="round">
    <path d="M632.600 388V432.400" stroke="#173d17" stroke-width="3.400"/>
    <path d="M632.600 388V432.400" stroke="#1d9c22" stroke-width="2.200"/>
    <path d="M632.600 384.200L636.800 388.400L632.600 392L628.400 388.400Z" fill="#1d9c22" stroke="#173d17" stroke-width=".500"/>
    <path d="M632.600 432.400V521" stroke="#5a2410" stroke-width="3.400"/>
    <path d="M632.600 432.400V521" stroke="#f2501a" stroke-width="2.200"/>
    <path d="M682.600 476.100H756" stroke="#5a2410" stroke-width="3.200"/>
    <path d="M682.600 476.100H756" stroke="#f2501a" stroke-width="2.200"/>
    <path d="M755.400 472.200L763.400 476.100L755.400 480Z" fill="#f2501a" stroke="#f2501a" stroke-width=".500" stroke-linejoin="round"/>
    <path d="M663.900 409.300Q708 418 726.700 452.900" stroke="#14304f" stroke-width="3.600"/>
    <path d="M663.900 409.300Q708 418 726.700 452.900" stroke="#1d7fdc" stroke-width="2.200"/>
    <path d="M665.300 542.700Q711.200 532.400 726.700 498.200" stroke="#173d17" stroke-width="3.600"/>
    <path d="M665.300 542.700Q711.200 532.400 726.700 498.200" stroke="#1d9c22" stroke-width="2.200"/>
   </g>
   <circle cx="632.600" cy="475.700" r="10.300" fill="#fff" fill-opacity=".92" stroke="#3a3f49" stroke-width=".700"/>
   <path d="M626 475.700C627.800 473 630 471.800 632.600 471.800S637.400 473 639.200 475.700C637.400 478.400 635.200 479.600 632.600 479.600S627.800 478.400 626 475.700Z" fill="none" stroke="#222" stroke-width=".900"/>
   <path d="M632.600 432.400V521" stroke="#5a2410" stroke-width="3.400" stroke-dasharray="0 32.500 22 100"/>
   <path d="M632.600 432.400V521" stroke="#f2501a" stroke-width="2.200" stroke-dasharray="0 32.500 22 100"/>
   <path d="M628.300 475.700L630.600 473.800V477.600ZM636.900 475.700L634.600 473.800V477.600Z" fill="#222"/>

   <g stroke="#7b838c" stroke-opacity=".62" stroke-width="1.6" fill="none">
    <path d="M96.5 113V916M199.5 113V916M302.5 113V916M405.5 113V916M508.5 113V916M611.5 113V916M714.5 113V916M817.5 113V916M920.5 113V916M1023.5 113V916M1126.5 113V916M1229.5 113V916"/>
    <path d="M56 147.7H1246M56 220.5H1246M56 293.3H1246M56 366.1H1246M56 438.9H1246M56 511.7H1246M56 584.5H1246M56 657.3H1246M56 730.1H1246M56 802.9H1246M56 875.7H1246"/>
   </g>
  </svg>
  <div class="tb" style="top:9px;height:95px"></div>
  <div class="tb" style="top:112px;height:191px"></div>
  <div class="tb" style="top:311px;height:95.5px"></div>
  <svg width="64" height="420" viewBox="0 0 64 420" style="left:0;top:0">
   <g fill="#2e3440">
    <!-- plus -->
    <path d="M31.050 18.900h1.700v6.250h6.250v1.700h-6.250v6.250h-1.700v-6.250h-6.250v-1.700h6.250z"/>
    <!-- tooth -->
    <path transform="translate(24.200 65.800)" d="M8 1.900C6.800.7 4.600 0 3 .4 1 1 0 3 .2 5.200c.2 2.400 1.400 4.200 2 6.400.4 1.400.7 3.700 2.100 3.700 1.300 0 1.300-2.300 1.700-3.900.3-1.200 1-2 2-2s1.700.8 2 2c.4 1.600.4 3.900 1.700 3.900 1.400 0 1.700-2.300 2.100-3.700.6-2.200 1.800-4 2-6.400C16 3 15 1 13 .4 11.400 0 9.200.7 8 1.900z"/>
    <!-- size -->
    <path d="M21.700 133h8.800v4.600h-8.800z"/>
    <!-- orient: diamond -->
    <path d="M27.800 172.500L34 178.700L27.800 184.900L21.600 178.700Z"/>
    <path d="M33.200 168.200L33.200 174.800L29.600 171.500Z"/>
    <!-- support model -->
    <path d="M29.100 216.800L38.400 222.100L35.600 227.600L25.700 222.500Z"/>
    <!-- layout -->
    <path d="M21.700 263.900h8.300v10.600h-8.300zM21.700 277h8.300v5.900h-8.300zM33 263.900h8.300v5.600h-8.300zM33 272.500h8.300v10.400h-8.300z"/>
    <!-- hole cube -->
    <path d="M33.300 367.700L42.100 371.600V381.800L33.300 385.900L23.800 381.800V372.100Z"/>
   </g>
   <rect x="22.600" y="122.300" width="18.500" height="14.400" fill="none" stroke="#2e3440" stroke-width="1.800" stroke-dasharray="1.800 1.910"/>
   <path d="M32.800 171.500A7.300 7.300 0 1 1 29.400 185.100" fill="none" stroke="#2e3440" stroke-width="1.700"/>
   <g fill="none" stroke="#2e3440" stroke-width="1.500">
    <path d="M23.300 233.300H42"/>
    <path d="M26.500 222V233M34.800 227V233M38.900 224.500V233M35.600 226.500L38.900 225"/>
   </g>
   <g fill="none" stroke="#fff" stroke-width="1.100">
    <path d="M24.400 372.600L32.600 376.300V385.200"/>
    <ellipse cx="27.900" cy="378.600" rx="2.200" ry="3.200" fill="#fff" stroke="none"/>
   </g>
  </svg>

<span class="t" style="left:17.8px;top:47.0px;font-size:9.4px;color:#4c525d;letter-spacing:0.14px;">Preset</span>
<span class="t" style="left:20.8px;top:94.8px;font-size:9.4px;color:#4c525d;letter-spacing:-0.06px;">Scan</span>
<span class="t" style="left:22.8px;top:150.4px;font-size:9.4px;color:#4c525d;letter-spacing:-0.08px;">Size</span>
<span class="t" style="left:18.1px;top:198.7px;font-size:9.4px;color:#4c525d;letter-spacing:0.23px;">Orient</span>
<span class="t" style="left:14.8px;top:246.6px;font-size:9.4px;color:#4c525d;letter-spacing:0.21px;">Support</span>
<span class="t" style="left:16.7px;top:293.4px;font-size:9.4px;color:#4c525d;letter-spacing:0.15px;">Layout</span>
<span class="t" style="left:22.8px;top:328.0px;font-size:14px;font-weight:700;color:#22262e;letter-spacing:0.19px;">Aa</span>
<span class="t" style="left:19.8px;top:350.0px;font-size:9.4px;color:#4c525d;letter-spacing:0.01px;">Label</span>
<span class="t" style="left:21.9px;top:397.6px;font-size:9.4px;color:#4c525d;letter-spacing:0.27px;">Hole</span>
  <section id="summary" style="position:absolute;left:9px;top:687px;width:326px;height:99px;border-radius:7px;background:rgba(250,251,252,.78);box-shadow:0 1px 5px rgba(40,50,60,.2)"></section>
  <svg width="400" height="803" viewBox="56 113 400 803" style="left:0;top:0">
   <g fill="none" stroke="#505662" stroke-width="1.250">
    <circle cx="159" cy="821.400" r="6.600"/>
    <circle cx="200.900" cy="853" r="6.600"/>
   </g>
   <g fill="#505662">
    <rect x="158.300" y="820.300" width="1.400" height="4.700"/><circle cx="159" cy="818.300" r=".900"/>
    <rect x="200.200" y="851.900" width="1.400" height="4.700"/><circle cx="200.900" cy="849.900" r=".900"/>
   </g>
   <!-- panel icon -->
   <rect x="336.300" y="817" width="10.600" height="9.600" fill="none" stroke="#5d6574" stroke-width="1.400"/>
   <rect x="342" y="817" width="5" height="9.600" fill="#5d6574"/>
   <!-- expand -->
   <path d="M369.400 817H373.600V821.200M368.800 825.800H364.600V821.600" fill="none" stroke="#5d6574" stroke-width="1.500"/>
   <!-- clock -->
   <circle cx="86.900" cy="853" r="7" fill="#5d6574"/>
   <path d="M86.900 848.600V853.200L89.900 855.200" fill="none" stroke="#fff" stroke-width="1.300"/>
   <!-- refresh clock -->
   <path d="M375.300 850.200A6.200 6.200 0 1 1 372.600 847.700" fill="none" stroke="#505662" stroke-width="1.400"/>
   <path d="M372.300 845.200L376.800 846.300L375.300 850.600Z" fill="#505662"/>
   <path d="M369.600 849.300V853.600L372.400 855.400" fill="none" stroke="#505662" stroke-width="1.300"/>
   <!-- volume -->
   <path d="M79.400 874.800L87 869.500L90.200 871.700C88.800 873.300 88.500 875.300 89.500 876.800C90.300 878 91.600 878.500 92.800 878.300L87 882.200Z" fill="#5d6574"/>
   <path d="M92 870.600C93.200 872.300 94.300 873.600 94.300 875A2.300 2.300 0 0 1 89.700 875C89.700 873.600 90.800 872.300 92 870.600Z" fill="#5d6574"/>
   <path d="M79.400 878.600L87 884.200L94.600 878.600" fill="none" stroke="#5d6574" stroke-width="1.700"/>
  </svg>

<span class="t" style="left:22.5px;top:708.1px;font-size:15.5px;font-weight:700;color:#14171c;letter-spacing:-0.46px;">Summary</span>
<span class="t" style="left:47.0px;top:740.4px;font-size:13.5px;color:#3a3f49;letter-spacing:-0.07px;">Time Estimate</span>
<span class="t" style="left:263.6px;top:740.4px;font-size:13.5px;color:#3a3f49;letter-spacing:-0.28px;">~33 m</span>
<span class="t" style="left:47.0px;top:763.8px;font-size:13.5px;color:#3a3f49;letter-spacing:0.05px;">Volume</span>
<span class="t" style="left:268.0px;top:763.8px;font-size:13.5px;color:#3a3f49;letter-spacing:-0.49px;">14.88 mL</span>
  <div style="position:absolute;left:990px;top:24.200px;width:100px;height:32px;border-radius:16px;background:#fff;box-shadow:0 1px 4px rgba(40,50,60,.3)"></div>
  <div style="position:absolute;left:990px;top:24.200px;width:32.900px;height:30px;border-radius:16px 0 0 16px;background:#dce9f6;border:1px solid #0a6ed1"></div>
  <div class="round" style="left:1077.700px;top:79.900px"></div>
  <div class="round" style="left:1125.700px;top:104.200px"></div>
  <div style="position:absolute;left:1138.500px;top:159px;width:6.500px;height:380px;border-radius:3px 3px 0 0;background:#fff"></div>
  <div style="position:absolute;left:1135.700px;top:531px;width:12px;height:12px;border-radius:50%;background:#c2c5c9;box-shadow:0 1px 2px rgba(0,0,0,.15)"></div>
  <div style="position:absolute;left:1131.800px;top:567.200px;width:20px;height:48px;border-radius:3.500px;background:#fff;box-shadow:0 1px 3px rgba(40,50,60,.25)"></div>
  <div style="position:absolute;left:1111.900px;top:583.100px;width:59.400px;height:16px;border-radius:3.500px;background:#fff;box-shadow:0 1px 3px rgba(40,50,60,.25)"></div>
  <div style="position:absolute;left:1131.800px;top:570px;width:20px;height:42px;background:#fff"></div>
  <div style="position:absolute;left:1138.200px;top:755.200px;width:33.400px;height:30px;border-radius:50%;background:#fff;border:1px solid #3f8cd9;box-shadow:0 1px 4px rgba(40,50,60,.3)"></div>
  <svg width="1190" height="803" viewBox="56 113 1190 803" style="left:0;top:0">
   <!-- pill icons -->
   <g fill="none" stroke-linecap="butt">
    <path d="M1060.600 158.100H1068.900" stroke="#0a6ed1" stroke-width="1.800"/>
    <path d="M1065.100 157.500V153.300C1065.100 150.800 1063.200 149.600 1061.400 147.700" stroke="#0a6ed1" stroke-width="1.700"/>
    <path d="M1092.600 158.100H1100.800M1096.700 157.500V151.500" stroke="#d2d7dc" stroke-width="1.700"/>
    <path d="M1093 147.600L1097.100 151.500" stroke="#2e3440" stroke-width="1.400"/>
    <path d="M1124.600 158.100H1132.800M1128.700 157.500V152.200L1126.200 148.700" stroke="#d2d7dc" stroke-width="1.700"/>
    <path d="M1125.200 147.500L1126.500 149.200" stroke="#2e3440" stroke-width="1.400"/>
   </g>
   <!-- view cube -->
   <g stroke="#c3c7cb" stroke-width=".600" stroke-linejoin="round">
    <path d="M1169.500 134.500L1176.200 128V154.800L1169.500 158Z" fill="#fdfdfd"/>
    <path d="M1170 158L1176.200 154.800L1180.600 157.200V165.700L1176.200 167.700L1170 164.500Z" fill="#f4f4f5"/>
    <path d="M1169.500 164.500L1176.200 167.700V195.200L1169.500 188.700Z" fill="#d9dcdf"/>
    <path d="M1219.400 128L1225.500 134.100V158L1219.400 154.800Z" fill="#cfd2d6"/>
    <path d="M1215.800 157.200L1219.400 154.800L1225.500 158V164.500L1219.400 167.700L1215.800 165.700Z" fill="#bfc3c8"/>
    <path d="M1219.400 167.700L1225.500 164.500V189.500L1219.400 195.200Z" fill="#b2b5b9"/>
    <rect x="1180.600" y="156.800" width="35.200" height="8.900" fill="#dfe2e5"/>
    <path d="M1179.800 126.300H1216.200L1219.400 128V154.800L1215.800 156.300H1180.600L1176.200 154.800V128Z" fill="#efeff0"/>
    <path d="M1180.600 166.300H1215.800L1219.400 167.700V195.200L1215.800 196.400H1179.800L1176.200 195.200V167.700Z" fill="#b4b4b5"/>
   </g>
   <!-- home -->
   <path d="M1149.700 203.900L1155.600 209.200H1154.200V213.600H1151V210.400H1148.400V213.600H1145.200V209.200H1143.800Z" fill="#1f2533"/>
   <!-- ruler -->
   <g transform="rotate(-37 1197.700 233.100)">
    <rect x="1189.900" y="229.700" width="15.600" height="6.800" rx=".800" fill="#1f2533"/>
    <path d="M1193 229.700V232.900M1196.200 229.700V232.900M1199.400 229.700V232.900M1202.600 229.700V232.900" stroke="#fff" stroke-width="1.100"/>
   </g>
   <!-- eye -->
   <path d="M1192.600 688C1194.200 685.500 1196 684.300 1198 684.300S1201.800 685.500 1203.400 688C1201.800 690.500 1200 691.700 1198 691.700S1194.200 690.500 1192.600 688Z" fill="#111"/>
   <circle cx="1198" cy="688" r="2.200" fill="#fff"/><circle cx="1198" cy="688" r="1.100" fill="#111"/>
   <!-- half square -->
   <rect x="1194.400" y="716.300" width="7" height="7.100" fill="none" stroke="#111" stroke-width="1"/>
   <rect x="1194" y="715.900" width="3.600" height="8" fill="#111"/>
   <!-- chat -->
   <g fill="none" stroke="#0a6ed1" stroke-width="1.100">
    <path d="M1206.500 877H1220.700V890H1209L1206.500 892.400Z" stroke-linejoin="round"/>
    <path d="M1209.800 885.800L1214.600 880.400" stroke-width="1.700" stroke-linecap="round"/>
    <path d="M1213.500 885.700H1218"/>
   </g>
  </svg>

<span class="t" style="left:1127.5px;top:28.5px;font-size:8.8px;font-weight:700;color:#1c2230;letter-spacing:-0.30px;">FRONT</span>
<span class="t" style="left:1123.7px;top:68.2px;font-size:8.8px;font-weight:700;color:#1c2230;letter-spacing:-0.25px;">BOTTOM</span>
<span class="t" style="left:1118.8px;top:590.5px;font-size:10.5px;color:#111;">X</span>
<span class="t" style="left:1138.4px;top:590.5px;font-size:10.5px;color:#111;">Y</span>
<span class="t" style="left:1158.5px;top:590.5px;font-size:10.5px;color:#0a6ed1;">Z</span>
 </main>
 <aside id="side">
  <div style="position:absolute;left:-1.600px;top:0;width:1.600px;height:803px;background:#c6cacf"></div>
  <div style="position:absolute;left:15px;top:17px;width:264px;height:266.5px;border:1px solid #e2e7ec;border-radius:7px;background:#f1f4f7"></div>
  <div style="position:absolute;left:16px;top:185.5px;width:264px;height:1px;background:#dfe4e9"></div>
  <div style="position:absolute;left:0;top:302px;width:297.5px;height:1px;background:#e6e9ed"></div>
  <div class="tog" style="top:342px"><i></i></div>
  <div class="tog" style="top:368px"><i></i></div>
  <div class="tog" style="top:394px"><i></i></div>
  <div style="position:absolute;left:0;top:421px;width:297.5px;height:22px;border-top:1px solid #dce3eb;border-bottom:1px solid #dce3eb;background:#fff"></div>
  <div style="position:absolute;left:-.5px;top:421px;width:2.5px;height:24px;background:#f6a41c"></div>
  <div style="position:absolute;left:0;top:485px;width:297.5px;height:25.5px;background:#dce9f6"></div>
  <div style="position:absolute;left:-.5px;top:485px;width:2px;height:25.5px;background:#4d8fd6"></div>
  <div style="position:absolute;left:15px;top:755px;width:266px;height:32px;border-radius:16px;background:#ff6200"></div>
  <svg width="297" height="803" viewBox="1247 113 297 803" style="left:0;top:0">
   <!-- printer -->
   <path d="M1279.400 161H1298A2 2 0 0 1 1300 163V180H1277.400V163A2 2 0 0 1 1279.400 161Z" fill="#676d7c"/>
   <path d="M1277.400 182.400H1300V191A2 2 0 0 1 1298 193H1279.400A2 2 0 0 1 1277.400 191Z" fill="#676d7c"/>
   <rect x="1288.400" y="184.400" width="9.300" height="6.100" rx=".800" fill="#fff"/>
   <!-- tank missing diamond -->
   <path d="M1455.700 274.300L1461.100 279.700L1455.700 285.100L1450.300 279.700Z" fill="#d63c0a"/>
   <path d="M1455.100 276.600H1456.300V280.600H1455.100ZM1455.100 281.600H1456.300V282.800H1455.100Z" fill="#fff"/>
   <!-- caret down -->
   <path d="M1520 430.900H1526.800L1523.400 434.600Z" fill="#14171c"/>
   <path d="M1519.700 576.400H1527L1523.300 580.200Z" fill="#14171c"/>
   <!-- caret right -->
   <path d="M1521.600 541.700L1525.800 545.500L1521.600 549.300Z" fill="#14171c"/>
   <!-- warning triangle -->
   <path d="M1268.500 538.800L1275.600 551.200H1261.400Z" fill="#f9a21b" stroke="#f9a21b" stroke-width="1" stroke-linejoin="round"/>
   <path d="M1267.900 542.600H1269.100V547.300H1267.900ZM1267.900 548.400H1269.100V549.700H1267.900Z" fill="#fff"/>
   <!-- eye -->
   <path d="M1513.300 610.500C1515.300 607.200 1517.900 605.600 1520.700 605.600S1526.100 607.200 1528.100 610.500C1526.100 613.800 1523.500 615.400 1520.700 615.400S1515.300 613.800 1513.300 610.500Z" fill="#1b1f27"/>
   <circle cx="1520.700" cy="610.500" r="3.100" fill="#dce9f6"/><circle cx="1520.700" cy="610.500" r="1.700" fill="#1b1f27"/>
   <!-- upload queue icon -->
   <path d="M1331.600 879H1345.200V880.900H1331.600ZM1331.600 882.700H1345.200V884.600H1331.600ZM1331.600 886.400H1341.200V888.300H1331.600Z" fill="#fff"/>
   <path d="M1342.300 886.200L1345.600 888.400L1342.300 890.700Z" fill="#fff"/>
  </svg>

<span class="t" style="left:30.8px;top:33.4px;font-size:13.5px;font-weight:700;color:#22262e;letter-spacing:-0.25px;">Printer</span>
<span class="t" style="left:68.2px;top:54.3px;font-size:15.5px;font-weight:700;color:#22262e;letter-spacing:-0.43px;">RussetHare</span>
<span class="t" style="left:68.2px;top:74.1px;font-size:13.5px;color:#6d7480;letter-spacing:-0.26px;">Form 4B</span>
<span class="t" style="left:30.8px;top:101.2px;font-size:13.5px;color:#6d7480;letter-spacing:-0.30px;">Status</span>
<span class="t" style="left:205.6px;top:101.2px;font-size:13.5px;color:#2e333c;letter-spacing:0.13px;">Not ready</span>
<span class="t" style="left:30.8px;top:123.1px;font-size:13.5px;color:#6d7480;letter-spacing:0.11px;">Connection</span>
<span class="t" style="left:233.8px;top:123.1px;font-size:13.5px;color:#2e333c;letter-spacing:-0.22px;">Local</span>
<span class="t" style="left:30.8px;top:145.0px;font-size:13.5px;color:#6d7480;letter-spacing:0.13px;">Cartridge</span>
<span class="t" style="left:162.5px;top:145.0px;font-size:13.5px;color:#2e333c;letter-spacing:-0.11px;">BioMed White V1</span>
<span class="t" style="left:30.8px;top:166.7px;font-size:13.5px;color:#6d7480;letter-spacing:-0.14px;">Tank</span>
<span class="t" style="left:219.7px;top:166.7px;font-size:13.5px;color:#e8501c;letter-spacing:-0.04px;">Missing</span>
<span class="t" style="left:30.8px;top:201.7px;font-size:13.5px;font-weight:700;color:#22262e;letter-spacing:-0.30px;">Job Settings</span>
<span class="t" style="left:30.8px;top:223.6px;font-size:13.5px;color:#6d7480;letter-spacing:-0.07px;">Material</span>
<span class="t" style="left:162.5px;top:223.6px;font-size:13.5px;color:#2e333c;letter-spacing:-0.11px;">BioMed White V1</span>
<span class="t" style="left:30.8px;top:245.7px;font-size:13.5px;color:#6d7480;letter-spacing:-0.06px;">Layer Thickness</span>
<span class="t" style="left:207.5px;top:245.7px;font-size:13.5px;color:#2e333c;letter-spacing:-0.33px;">0.100 mm</span>
<span class="t" style="left:30.8px;top:267.6px;font-size:13.5px;color:#6d7480;letter-spacing:-0.02px;">Print Settings</span>
<span class="t" style="left:222.0px;top:267.6px;font-size:13.5px;color:#2e333c;letter-spacing:0.07px;">Default</span>
<span class="t" style="left:14.9px;top:318.0px;font-size:15.5px;font-weight:700;color:#14171c;letter-spacing:-0.20px;">Print Validation</span>
<span class="t" style="left:14.8px;top:348.3px;font-size:13.5px;color:#6d7480;letter-spacing:0.22px;">Undersupported Models</span>
<span class="t" style="left:14.8px;top:373.9px;font-size:13.5px;color:#6d7480;letter-spacing:-0.12px;">Minima</span>
<span class="t" style="left:14.8px;top:399.8px;font-size:13.5px;color:#6d7480;letter-spacing:-0.27px;">Cups</span>
<span class="t" style="left:37.5px;top:432.7px;font-size:13.5px;color:#3a3f49;letter-spacing:0.09px;">Some Print Validations Are Disabled</span>
<span class="t" style="left:14.8px;top:464.1px;font-size:15.5px;font-weight:700;color:#14171c;letter-spacing:-0.47px;">Model List (1)</span>
<span class="t" style="left:14.8px;top:497.2px;font-size:13.5px;color:#3a3f49;letter-spacing:-0.10px;">GH LowerJawScan</span>
<span class="t" style="left:107.3px;top:771.4px;font-size:13.5px;color:#ffffff;letter-spacing:0.19px;">Upload to Queue</span>
 </aside>
</div>
</body>
</html>
